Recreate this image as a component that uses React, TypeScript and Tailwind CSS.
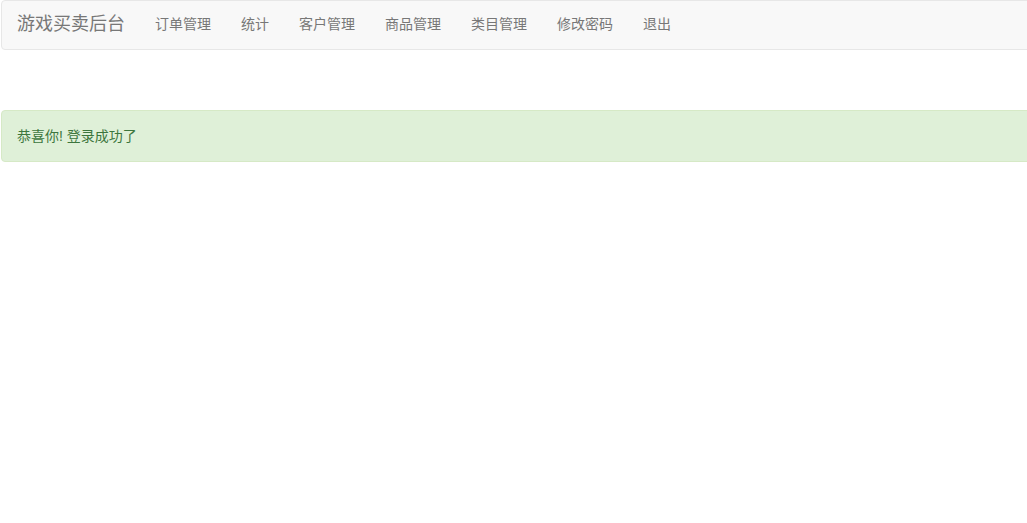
export default function App() {
  const links = ["订单管理", "统计", "客户管理", "商品管理", "类目管理", "修改密码", "退出"];

  return (
    <div
      className="w-screen min-h-screen overflow-hidden bg-white text-sm"
      style={{ fontFamily: '"Liberation Sans", "Noto Sans CJK SC", sans-serif' }}
    >
      {/* Navbar */}
      <nav className="ml-px w-[calc(100%+20px)] h-[50px] pb-[2px] flex items-center bg-[#f8f8f8] border border-[#e7e7e7] rounded">
        <a className="px-[15px] text-[18px] leading-[20px] text-[#777]">游戏买卖后台</a>
        <ul className="flex">
          {links.map((l) => (
            <li key={l}>
              <a className="block px-[15px] leading-[20px] text-[#777]">{l}</a>
            </li>
          ))}
        </ul>
      </nav>

      {/* Alert */}
      <div className="mt-[60px] ml-px w-[calc(100%+20px)] px-[15px] py-[15px] leading-[20px] bg-[#dff0d8] border border-[#d6e9c6] rounded text-[#3c763d]">
        恭喜你! 登录成功了
      </div>
    </div>
  );
}
